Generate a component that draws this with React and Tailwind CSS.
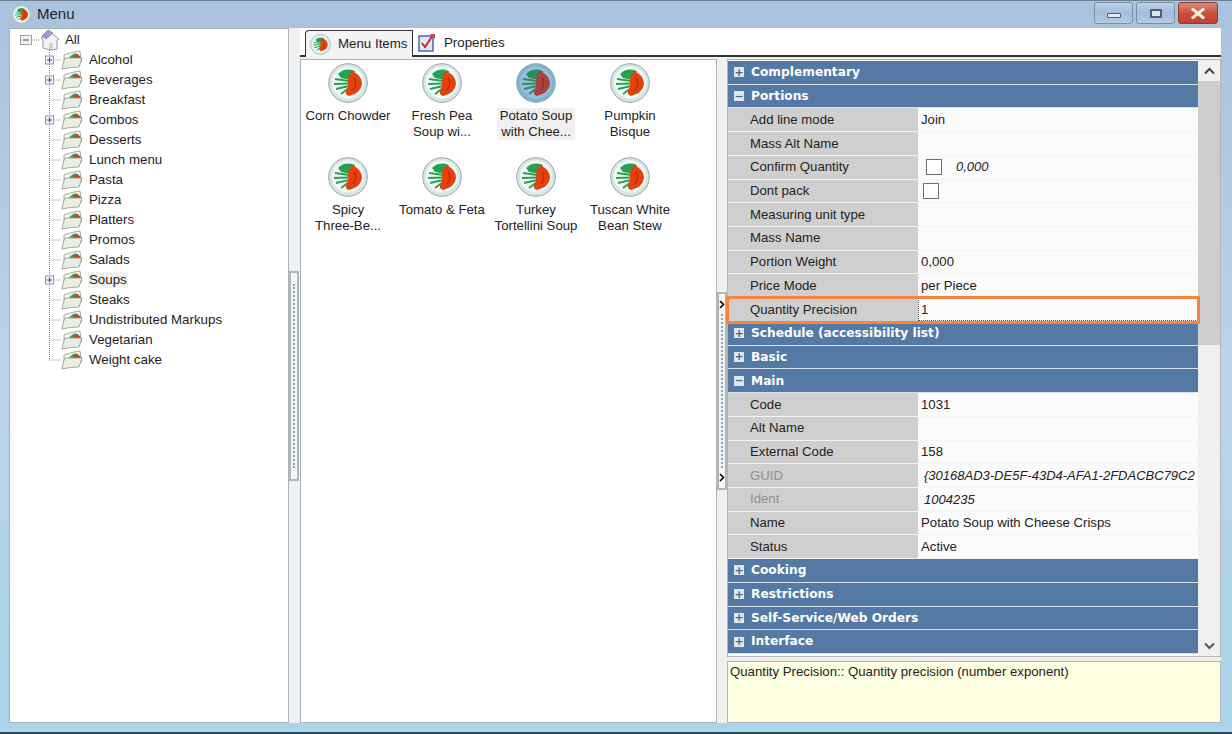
import React from "react";

const font = "font-['Liberation_Sans',Arial,sans-serif]";

const treeItems = [
  { name: "Alcohol", plus: true },
  { name: "Beverages", plus: true },
  { name: "Breakfast" },
  { name: "Combos", plus: true },
  { name: "Desserts" },
  { name: "Lunch menu" },
  { name: "Pasta" },
  { name: "Pizza" },
  { name: "Platters" },
  { name: "Promos" },
  { name: "Salads" },
  { name: "Soups", plus: true, selected: true },
  { name: "Steaks" },
  { name: "Undistributed Markups" },
  { name: "Vegetarian" },
  { name: "Weight cake", last: true },
];

const menuItems = [
  ["Corn Chowder"],
  ["Fresh Pea", "Soup wi..."],
  ["Potato Soup", "with Chee..."],
  ["Pumpkin", "Bisque"],
  ["Spicy", "Three-Be..."],
  ["Tomato & Feta"],
  ["Turkey", "Tortellini Soup"],
  ["Tuscan White", "Bean Stew"],
];

const rows = [
  { cat: "Complementary" },
  { cat: "Portions", open: true },
  { label: "Add line mode", value: "Join" },
  { label: "Mass Alt Name" },
  { label: "Confirm Quantity", check: true, value: "0,000" },
  { label: "Dont pack", check: true, shift: true },
  { label: "Measuring unit type" },
  { label: "Mass Name" },
  { label: "Portion Weight", value: "0,000" },
  { label: "Price Mode", value: "per Piece" },
  { label: "Quantity Precision", value: "1", focus: true },
  { cat: "Schedule (accessibility list)" },
  { cat: "Basic" },
  { cat: "Main", open: true },
  { label: "Code", value: "1031" },
  { label: "Alt Name" },
  { label: "External Code", value: "158" },
  { label: "GUID", value: "{30168AD3-DE5F-43D4-AFA1-2FDACBC79C2", muted: true },
  { label: "Ident", value: "1004235", muted: true },
  { label: "Name", value: "Potato Soup with Cheese Crisps" },
  { label: "Status", value: "Active" },
  { cat: "Cooking" },
  { cat: "Restrictions" },
  { cat: "Self-Service/Web Orders" },
  { cat: "Interface" },
];

function Plate({ size = 40, tint = false }) {
  const green = tint ? "#2f8a62" : "#27a052";
  return (
    <svg width={size} height={size} viewBox="0 0 40 40" className="shrink-0">
      <circle cx="20" cy="20" r="19.3" fill={tint ? "#7fb2d6" : "#d6e6e2"} stroke="#9aa5a5" strokeWidth="1" />
      <circle cx="20" cy="19.5" r="16" fill={tint ? "#94c0de" : "#f4faf7"} />
      <path d="M10 11 Q17 4 27 8 L23 17 L13 15 Z" fill={green} />
      <path d="M7 16 L21 18 M6 21 L21 20.5 M8 26 L21 23 M13 31 L21 25" stroke={green} strokeWidth="2" fill="none" />
      <path d="M24 8 Q34 12 34 21 Q33 30 21 33 Q17 32 18 28 Q21 24 20 19 Q20 12 24 8 Z" fill={tint ? "#a8443c" : "#e5410f"} />
      <path d="M26 15 Q30 20 25 27" stroke={tint ? "#7e2f2a" : "#b02a08"} strokeWidth="1.3" fill="none" />
    </svg>
  );
}

function Folder() {
  return (
    <svg width="22" height="20" viewBox="0 0 22 20" className="shrink-0">
      <path d="M3 5 Q10 2 19 1 L20.5 12 L3 13 Z" fill="#f4f7f2" stroke="#8c9a8c" strokeWidth="0.8" />
      <path d="M8 8 Q12 2 17 4 L18 9 L9 9 Z" fill="#3c9f4c" />
      <path d="M13 5 Q18 3 20 8 L14 9 Z" fill="#d93a1a" />
      <path d="M1 19 Q2 12 4 8 L21 8 L18 17 Q9 17 1 19 Z" fill="#e8eee4" stroke="#8c9a8c" strokeWidth="0.8" />
    </svg>
  );
}

function Home() {
  return (
    <svg width="20" height="22" viewBox="0 0 20 22" className="shrink-0">
      <path d="M10 3 L19 10 L17 11 L17 20 L10 21 L3 19 L3 11 L1 9 Z" fill="#f4f4f6" stroke="#8b8ba5" strokeWidth="0.9" />
      <path d="M2 7 L8 1 L13 4 L6 10 Z" fill="#9a9ad6" stroke="#6a6aa8" strokeWidth="0.6" />
      <path d="M9 20 L9 14 L13 14 L13 20 Z" fill="#d8d2c4" />
    </svg>
  );
}

function TreeRow({ item }) {
  return (
    <div className="flex items-center h-5">
      <svg width="51" height="20" viewBox="0 0 51 20" className="shrink-0">
        <path d={item.last ? "M39.5 0 V10 H51" : "M39.5 0 V20 M39.5 10 H51"} stroke="#8a8a8a" strokeWidth="1" strokeDasharray="1 1" fill="none" />
        {item.plus && (
          <g>
            <rect x="35.5" y="6" width="8" height="8" fill="#f2f3f8" stroke="#8d9cb0" strokeWidth="1" />
            <path d="M37 10 H42 M39.5 7.5 V12.5" stroke="#3b4f8f" strokeWidth="1" />
          </g>
        )}
      </svg>
      <Folder />
      <span className={"ml-[5px] px-px text-[13.3px] text-[#222] leading-4 " + (item.selected ? "bg-[#f0f0f0]" : "")}>{item.name}</span>
    </div>
  );
}

function Chevron() {
  return (
    <svg width="6" height="9" viewBox="0 0 6 9" className="shrink-0">
      <path d="M1 1 L4.5 4.5 L1 8" stroke="#000" strokeWidth="1.6" fill="none" />
    </svg>
  );
}

function Splitter({ arrows, height }) {
  return (
    <div className="w-[10px] shrink-0 flex flex-col justify-center">
      <div className={"w-full border-2 border-[#b5b5b5] bg-[#f7f7f7] flex flex-col items-center py-[6px] " + height}>
        {arrows && <Chevron />}
        <div className="flex-1 my-[5px] border-l-2 border-dotted border-[#7ba5d0]" />
        {arrows && <Chevron />}
      </div>
    </div>
  );
}

function CatRow({ row }) {
  return (
    <div className="h-[23.72px] flex items-center bg-[#5479a4] border-b border-[#d8e2ec] pl-[6px]">
      <span className="w-[10px] h-[10px] bg-[#dfe6ee] flex items-center justify-center text-[#46688f] text-[11px] leading-none font-bold font-['DejaVu_Sans',sans-serif]">
        {row.open ? "−" : "+"}
      </span>
      <span className="ml-[7px] font-['DejaVu_Sans',sans-serif] text-white font-bold text-[12.2px]">{row.cat}</span>
    </div>
  );
}

function PropRow({ row }) {
  return (
    <div className={"h-[23.72px] flex border-b border-[#f4f4f4] " + (row.focus ? "outline-[3px] outline-[#f5853f] -outline-offset-1 relative" : "")}>
      <div className={"w-[190px] shrink-0 bg-[#cfcfcf] pl-[22px] flex items-center text-[13.2px] " + (row.muted ? "text-[#8f8f8f]" : "text-[#222]")}>
        {row.label}
      </div>
      <div className={"flex-1 min-w-0 bg-[#fbfbfb] flex items-center text-[13.2px] text-[#222] whitespace-nowrap overflow-hidden " + (row.focus ? "pl-[2px] border border-dotted border-[#555]" : "pl-[3px]")}>
        {row.check && <span className={"w-[16px] h-[16px] border border-[#6f6f6f] bg-white shrink-0 " + (row.shift ? "ml-[2px]" : "ml-[5px]")} />}
        {row.value && (
          <span className={row.muted || row.check ? "italic " + (row.check ? "ml-[14px] text-[13px]" : "ml-[3px] text-[13px]") : ""}>{row.value}</span>
        )}
      </div>
    </div>
  );
}

function WinButton({ className, children }) {
  return (
    <div className={"h-[22px] rounded-[3px] border border-[#7c8ea6] flex items-center justify-center " + className}>
      {children}
    </div>
  );
}

export default function App() {
  return (
    <div className={"w-[1232px] h-[734px] overflow-hidden flex flex-col border-t border-b-2 border-t-[#6f7f90] border-b-[#2d4a5c] bg-gradient-to-b from-[#a9c2dd] via-[#bcd2e9] to-[#a9d4ea] " + font}>
      <div className="h-[27px] shrink-0 flex items-center pl-[12px]">
        <Plate size={19} />
        <span className="ml-[6px] text-[15px] text-[#1c2733]">Menu</span>
        <div className="ml-auto mr-[14px] mb-[3px] flex gap-[3px]">
          <WinButton className="w-[39px] bg-gradient-to-b from-[#bdd1e7] via-[#a3bdd9] to-[#b4cce4]">
            <span className="w-[14px] h-[5px] mt-[5px] bg-[#e4eaf0] border border-[#4e5f75] rounded-[1px]" />
          </WinButton>
          <WinButton className="w-[39px] bg-gradient-to-b from-[#bdd1e7] via-[#a3bdd9] to-[#b4cce4]">
            <span className="w-[12px] h-[9px] border-2 border-[#4e5f75] bg-[#dde5ee] rounded-[1px]" />
          </WinButton>
          <WinButton className="w-[40px] bg-gradient-to-b from-[#dd8a78] via-[#c8523e] to-[#c2402c] border-[#8c3a30]">
            <svg width="14" height="11" viewBox="0 0 14 11">
              <path d="M2 1.5 L12 9.5 M12 1.5 L2 9.5" stroke="#f2ece8" strokeWidth="3" strokeLinecap="square" />
            </svg>
          </WinButton>
        </div>
      </div>

      <div className="flex-1 min-h-0 flex pl-[9px] pr-[11px] pb-[9px]">
        <div className="w-[280px] shrink-0 bg-white border border-[#a9b3bd] pt-px overflow-hidden">
          <div className="flex items-center h-5">
            <svg width="30" height="20" viewBox="0 0 30 20" className="shrink-0">
              <rect x="10.5" y="5.5" width="11" height="9" fill="#f2f3f3" stroke="#9aa3ad" strokeWidth="1" />
              <path d="M13 10 H19" stroke="#444" strokeWidth="1" />
              <path d="M22 10 H30" stroke="#8a8a8a" strokeWidth="1" strokeDasharray="1 1" />
            </svg>
            <Home />
            <span className="ml-[5px] text-[13.3px] text-[#222]">All</span>
          </div>
          {treeItems.map((item) => (
            <TreeRow key={item.name} item={item} />
          ))}
        </div>

        <div className="w-[11px] shrink-0 bg-[#f0f0f0] flex justify-center pr-px">
          <Splitter height="h-[210px]" />
        </div>

        <div className="flex-1 min-w-0 flex flex-col bg-[#f0f0f0]">
          <div className="h-[29px] shrink-0 bg-white flex items-end pl-[5px] border-b-2 border-[#333]">
            <div className="w-[108px] h-[27px] -mb-[2px] flex items-center pl-[4px] bg-[#f4f4f4] border border-b-0 border-[#333] rounded-tl-[4px]">
              <Plate size={21} />
              <span className="ml-[7px] text-[13.3px] text-[#222]">Menu Items</span>
            </div>
            <div className="h-[25px] flex items-center pl-[5px]">
              <svg width="18" height="20" viewBox="0 0 18 20">
                <rect x="1" y="3" width="14" height="15" fill="#dfe8f6" stroke="#3f5fa8" strokeWidth="1.4" />
                <path d="M4 10 L7 14 L15 2" stroke="#d8242c" strokeWidth="2" fill="none" />
                <path d="M12 1 L17 1 L17 6 Z" fill="#c9455a" />
              </svg>
              <span className="ml-[8px] text-[13.3px] text-[#222]">Properties</span>
            </div>
          </div>

          <div className="flex-1 min-h-0 flex pt-[2px]">
            <div className="w-[417px] shrink-0 bg-white border border-[#a9b3bd]">
              <div className="grid grid-cols-[repeat(4,94px)] auto-rows-[94px] pt-[3px]">
                {menuItems.map((lines) => {
                  const selected = lines[0] === "Potato Soup";
                  return (
                    <div key={lines[0]} className="flex flex-col items-center">
                      <Plate tint={selected} />
                      <div className={"mt-[5px] px-[3px] text-center text-[13.2px] leading-4 whitespace-nowrap text-[#222] " + (selected ? "bg-[#f0f0f0]" : "")}>
                        {lines.map((l) => (
                          <div key={l}>{l}</div>
                        ))}
                      </div>
                    </div>
                  );
                })}
              </div>
            </div>

            <Splitter arrows height="h-[198px]" />

            <div className="flex-1 min-w-0 flex flex-col">
              <div className="h-[598px] shrink-0 flex border border-[#b4b4b4] bg-white">
                <div className="w-[470px] shrink-0 pt-px">
                  {rows.map((row, i) =>
                    row.cat ? <CatRow key={i} row={row} /> : <PropRow key={i} row={row} />
                  )}
                </div>
                <div className="flex-1 flex flex-col bg-[#f0f0f0]">
                  <div className="h-[21px] flex items-center justify-center">
                    <svg width="11" height="8" viewBox="0 0 11 8"><path d="M1 6.5 L5.5 2 L10 6.5" stroke="#444" strokeWidth="2" fill="none" /></svg>
                  </div>
                  <div className="h-[264px] bg-[#cdcdcd]" />
                  <div className="flex-1" />
                  <div className="h-[21px] flex items-center justify-center">
                    <svg width="11" height="8" viewBox="0 0 11 8"><path d="M1 1.5 L5.5 6 L10 1.5" stroke="#555" strokeWidth="2" fill="none" /></svg>
                  </div>
                </div>
              </div>
              <div className="mt-[4px] flex-1 bg-[#ffffe1] border border-[#b4b4b4] pl-[2px] pt-[2px] text-[13.2px] leading-4 text-[#222]">
                Quantity Precision:: Quantity precision (number exponent)
              </div>
            </div>
          </div>
        </div>
      </div>
    </div>
  );
}
